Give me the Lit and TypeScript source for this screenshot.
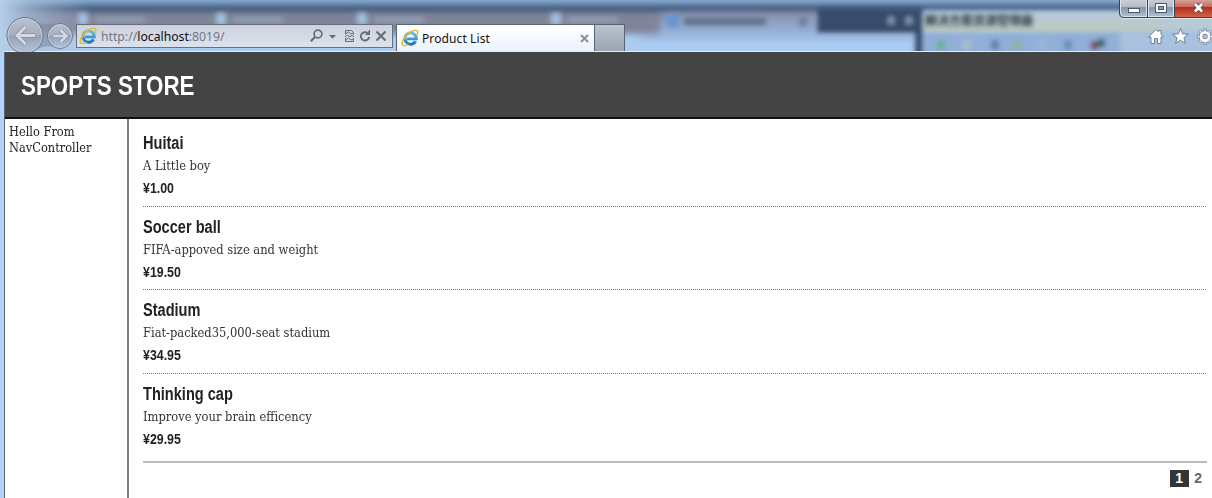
import { LitElement, html, svg, css, type TemplateResult } from 'lit';
import { customElement, property } from 'lit/decorators.js';

interface Product {
  name: string;
  description: string;
  price: string;
}

const PRODUCTS: Product[] = [
  { name: 'Huitai', description: 'A Little boy', price: '¥1.00' },
  { name: 'Soccer ball', description: 'FIFA-appoved size and weight', price: '¥19.50' },
  { name: 'Stadium', description: 'Fiat-packed35,000-seat stadium', price: '¥34.95' },
  { name: 'Thinking cap', description: 'Improve your brain efficency', price: '¥29.95' },
];

const ieLogo = html`
  <svg width="18" height="18" viewBox="0 0 18 18">
    <defs>
      <linearGradient id="e" x1="0" y1="0" x2="0" y2="1">
        <stop offset="0" stop-color="#5fc0f0" />
        <stop offset="1" stop-color="#1c76c4" />
      </linearGradient>
    </defs>
    <path d="M14.6 12.3A5.7 5.7 0 1 1 15.3 9.9H6" fill="none" stroke="url(#e)" stroke-width="2.9" />
    <path
      d="M3 16.6C-1 16 2.2 8.6 7.3 4.6C11.6 1.1 17-.1 16.8 3.4C16.8 4.3 16.4 5.2 15.9 6"
      fill="none"
      stroke="#efb81d"
      stroke-width="1.5"
    />
    <path d="M3 16.6C4.2 17 6 16.1 7.4 15.2" fill="none" stroke="#efb81d" stroke-width="1.3" />
  </svg>
`;

// ====================================================================
// Aero glass: blurred windows showing through the title bar
// ====================================================================
@customElement('glass-backdrop')
class GlassBackdrop extends LitElement {
  static styles = css`
    :host { display: block; }
    svg { display: block; }
  `;

  protected render(): TemplateResult {
    const tabs = [79, 217, 358, 552];
    const tools = [941, 967, 995, 1017, 1042, 1068];
    const toolColors = ['#62b39a', '#a9bdca', '#607fa6', '#8db39b', '#9cb8d8', '#668bb8'];
    return html`
      <svg width="1212" height="52" viewBox="0 0 1212 52">
        <defs>
          <filter id="soft" x="-10%" y="-30%" width="120%" height="160%">
            <feGaussianBlur stdDeviation="3" />
          </filter>
          <filter id="light" x="-10%" y="-30%" width="120%" height="160%">
            <feGaussianBlur stdDeviation="2.4" />
          </filter>
          <linearGradient id="edge" x1="0" y1="0" x2="1" y2="0">
            <stop offset="0" stop-color="#b5cfea" />
            <stop offset="0.4" stop-color="#a9bfd9" stop-opacity="0.6" />
            <stop offset="1" stop-color="#a9bfd9" stop-opacity="0" />
          </linearGradient>
        </defs>
        <rect width="1212" height="52" fill="#abcdf2" />
        <g filter="url(#soft)">
          <rect x="-10" y="-10" width="1240" height="14" fill="#88aad0" />
          <rect x="-10" y="4" width="1160" height="8" fill="#34547c" />
          <rect x="-10" y="12" width="670" height="22" fill="#7f8499" />
          <rect x="660" y="12" width="157" height="21" fill="#8e97b0" />
          <rect x="660" y="22" width="156" height="11" fill="#8fa9cc" />
          <rect x="640" y="36" width="274" height="3" fill="#8aa6c6" />
        </g>
        <g filter="url(#light)">
          ${tabs.map(
            (x) => svg`
              <rect x=${x - 1} y="13" width="10" height="12" fill="#a0c2de" />
              <rect x=${x + 16} y="17" width="50" height="6" fill="#929cb2" />
            `,
          )}
          <rect x="667" y="14" width="12" height="13" fill="#6595d2" />
          <rect x="684" y="18" width="82" height="7" fill="#5d6e8b" />
          <rect x="799" y="17" width="8" height="9" fill="#6a7f9f" />
          <rect x="817" y="8" width="98" height="25" fill="#374c6b" />
          <rect x="915" y="8" width="8" height="50" fill="#374d6e" />
          <rect x="888" y="17" width="6" height="7" fill="#8b9db5" />
          <rect x="906" y="17" width="6" height="7" fill="#8b9db5" />
          <rect x="924" y="11" width="300" height="20" fill="#b7cad6" />
          <rect x="924" y="24" width="240" height="7" fill="#bdcbba" />
          <rect x="924" y="32" width="300" height="30" fill="#91afd7" />
          ${tools.map((x, i) => svg`<rect x=${x - 4} y="40" width="8" height="10" fill=${toolColors[i]} />`)}
          <rect x="1091" y="41" width="7" height="9" fill="#7d3d57" />
          <rect x="1098" y="39" width="7" height="8" fill="#26644f" />
          <rect x="1120" y="33" width="110" height="30" fill="#a8c1df" />
        </g>
        <text x="925" y="25" font-family="Noto Sans CJK SC, sans-serif" font-weight="700"
          font-size="12" fill="#1d282e" opacity="0.95" filter="url(#light)">解决方案资源管理器</text>
        <rect width="90" height="52" fill="url(#edge)" />
        <rect x="4" y="51" width="1208" height="1" fill="#e4eef8" />
      </svg>
    `;
  }
}

// ====================================================================
// Browser window chrome
// ====================================================================
@customElement('browser-chrome')
class BrowserChrome extends LitElement {
  static styles = css`
    :host {
      display: block;
      position: relative;
      height: 52px;
      overflow: hidden;
      font-family: 'Noto Sans', 'Open Sans', sans-serif;
      font-size: 12px;
    }
    svg { display: block; flex: none; }
    glass-backdrop { position: absolute; inset: 0; }
    .bar {
      position: relative;
      display: flex;
      align-items: flex-start;
      height: 51px;
      box-sizing: border-box;
      padding: 16px 0 0 5px;
    }
    .address {
      box-sizing: border-box;
      display: flex;
      align-items: center;
      width: 317px;
      height: 24px;
      margin: 8px 0 0 1px;
      padding: 0 5px 0 2px;
      border: 1px solid #66707f;
      background: linear-gradient(#cdd1dc, #dbe2ee);
      color: #717780;
    }
    .url { flex: 1; margin-left: 4px; letter-spacing: 0.01px; font-size: 12.2px; }
    .url b { font-weight: 400; color: #0c0c0c; }
    .tab {
      box-sizing: border-box;
      display: flex;
      align-items: center;
      width: 199px;
      height: 27px;
      margin: 8px 0 0 3px;
      padding: 0 5px 0 4px;
      border: 1px solid #5a6370;
      border-bottom: 0;
      background: linear-gradient(#fff, #f7f9fd 50%, #e9f2fb);
      color: #111;
    }
    .tab span { flex: 1; margin: 1px 0 0 3px; letter-spacing: 0.1px; }
    .new-tab {
      box-sizing: border-box;
      width: 30px;
      height: 27px;
      margin-top: 8px;
      border: 1px solid #5a6370;
      border-left: 0;
      border-bottom: 0;
      background: linear-gradient(#bac3cf, #9ba5b1);
    }
    .tools { margin: 11px 0 0 auto; }
    .caption { position: absolute; top: 0; right: 0; }
  `;

  protected render(): TemplateResult {
    return html`
      <glass-backdrop></glass-backdrop>
      <div class="bar">
        ${this._navButtons()}
        <div class="address">
          ${ieLogo}
          <span class="url">http://<b>localhost</b>:8019/</span>
          ${this._addressIcons()}
        </div>
        <div class="tab">
          ${ieLogo}
          <span>Product List</span>
          <svg width="9" height="9" viewBox="0 0 9 9">
            <path d="M1 1L8 8M8 1L1 8" stroke="#8d9197" stroke-width="2" />
          </svg>
        </div>
        <div class="new-tab"></div>
        ${this._toolIcons()}
      </div>
      ${this._captionButtons()}
    `;
  }

  private _navButtons(): TemplateResult {
    return html`
      <svg width="70" height="36" viewBox="5 16 70 36">
        <defs>
          <linearGradient id="disc" x1="0" y1="0" x2="0" y2="1">
            <stop offset="0" stop-color="#b9c1d0" />
            <stop offset="0.48" stop-color="#a6afbf" />
            <stop offset="0.52" stop-color="#97a2b5" />
            <stop offset="1" stop-color="#b5c4da" />
          </linearGradient>
        </defs>
        <path d="M34 20Q43 26 54 23L54 47Q45 45 38 49Z" fill="#7c879c" opacity="0.55" />
        <circle cx="25" cy="35.5" r="18" fill="url(#disc)" stroke="#6b7688" />
        <circle cx="25" cy="35.5" r="16.9" fill="none" stroke="#c9d2df" stroke-width="0.7" />
        <path d="M25.5 27L17 35.5L25.5 44M17.5 35.5H35" fill="none" stroke="#8490a4" stroke-width="4.6" />
        <path d="M25.5 27L17 35.5L25.5 44M17.5 35.5H35" fill="none" stroke="#d3d9e2" stroke-width="3" />
        <circle cx="60" cy="36" r="12.5" fill="url(#disc)" stroke="#6b7688" />
        <circle cx="60" cy="36" r="11.5" fill="none" stroke="#c9d2df" stroke-width="0.7" />
        <path d="M60.5 30L66.5 36L60.5 42M66 36H53.5" fill="none" stroke="#8490a4" stroke-width="4" />
        <path d="M60.5 30L66.5 36L60.5 42M66 36H53.5" fill="none" stroke="#d3d9e2" stroke-width="2.5" />
      </svg>
    `;
  }

  private _addressIcons(): TemplateResult {
    return html`
      <svg width="78" height="16" viewBox="309 28 78 16" fill="none" stroke="#666c75">
        <circle cx="318" cy="34" r="3.9" stroke-width="1.7" />
        <path d="M315 37L310.8 41.2" stroke-width="2.3" />
        <path d="M329 35H336L332.5 38.7Z" fill="#666c75" stroke="none" />
        <path d="M345.5 34.5V30.5H351.5L353.5 32.5V34.5M345.5 38V41.5H353.5V38" />
        <path d="M346 33.5L348.5 32L351 34L353 33M345 36.8L347.5 35L350 37L352 35L354 37M346 39.5L348.5 38L351 40L353 39" />
        <path d="M367.6 33A4.2 4.2 0 1 0 369.2 37" stroke-width="1.9" />
        <path d="M365 35H370V29.5Z" fill="#666c75" stroke="none" />
        <path d="M376.5 31.5L385.5 40.5M385.5 31.5L376.5 40.5" stroke-width="2" />
      </svg>
    `;
  }

  private _toolIcons(): TemplateResult {
    const teeth = [0, 45, 90, 135, 180, 225, 270, 315];
    return html`
      <svg class="tools" width="66" height="20" viewBox="1146 27 66 20">
        <path
          d="M1156 29.5L1148.5 37H1151V43.5H1154.5V38.5H1157.5V43.5H1161V37H1163.5L1161 34.5V30.5H1158.5V32Z"
          fill="#fff" stroke="#66768c" stroke-width="0.9"
        />
        <path
          d="M1180.5 28.5L1182.6 33.9L1188.4 34.2L1183.9 37.8L1185.4 43.4L1180.5 40.2L1175.6 43.4L1177.1 37.8L1172.6 34.2L1178.4 33.9Z"
          fill="#fff" stroke="#66768c" stroke-width="0.9"
        />
        ${teeth.map(
          (a) => svg`<path d="M1203.4 33L1203.8 28.8H1206.2L1206.6 33Z" fill="#fff" stroke="#66768c"
            stroke-width="0.8" transform=${`rotate(${a} 1205 36.5)`} />`,
        )}
        <circle cx="1205" cy="36.5" r="4.1" fill="none" stroke="#66768c" stroke-width="4" />
        <circle cx="1205" cy="36.5" r="4.1" fill="none" stroke="#fff" stroke-width="2.9" />
      </svg>
    `;
  }

  private _captionButtons(): TemplateResult {
    return html`
      <svg class="caption" width="94" height="20" viewBox="1118 0 94 20">
        <defs>
          <linearGradient id="cap" x1="0" y1="0" x2="0" y2="1">
            <stop offset="0" stop-color="#c9d1da" />
            <stop offset="0.45" stop-color="#b2bdc9" />
            <stop offset="0.46" stop-color="#8696aa" />
            <stop offset="1" stop-color="#b1c4d8" />
          </linearGradient>
          <linearGradient id="red" x1="0" y1="0" x2="0" y2="1">
            <stop offset="0" stop-color="#dda79c" />
            <stop offset="0.45" stop-color="#c6685a" />
            <stop offset="0.46" stop-color="#b52e1b" />
            <stop offset="1" stop-color="#cf674b" />
          </linearGradient>
        </defs>
        <path d="M1119.5-1V13Q1119.5 17.5 1124 17.5H1213V-1Z" fill="url(#cap)" />
        <path d="M1174.5-1V17.5H1213V-1Z" fill="url(#red)" />
        <path d="M1120.5 0V13Q1120.5 16.5 1124 16.5H1146.5V0M1148.5 0V16.5H1173.5V0" fill="none" stroke="#dce5ee" />
        <path d="M1119.5-1V13Q1119.5 17.5 1124 17.5H1213M1147.5 0V17M1174.5 0V17" fill="none" stroke="#3b4552" />
        <path d="M1122 18.5H1212" stroke="#d9e4ee" />
        <rect x="1128.5" y="8.5" width="11" height="4" fill="#fff" stroke="#4e5866" />
        <rect x="1155.5" y="3.5" width="11" height="9" fill="#fff" stroke="#4e5866" />
        <rect x="1158.5" y="6.5" width="5" height="3" fill="#8c9aad" stroke="#4e5866" />
        <path d="M1195 4L1202 11.5M1202 4L1195 11.5" stroke="#4e4a53" stroke-width="4.6" />
        <path d="M1195 4L1202 11.5M1202 4L1195 11.5" stroke="#fff" stroke-width="2.7" />
      </svg>
    `;
  }
}

@customElement('product-item')
class ProductItem extends LitElement {
  @property({ attribute: false }) product!: Product;

  static styles = css`
    :host { display: block; }
    h3, h4, p {
      width: max-content;
      margin: 0;
      white-space: nowrap;
      color: #222;
      transform-origin: 0 50%;
    }
    h3, h4 { font-family: 'Liberation Sans', sans-serif; }
    h3 {
      padding-top: 9px;
      font-size: 17.6px;
      line-height: 22px;
      transform: scaleX(0.828);
    }
    p {
      font: 13px/23px 'DejaVu Serif Condensed', 'DejaVu Serif', serif;
      font-stretch: condensed;
      color: #333;
      transform: scaleX(0.982);
    }
    h4 {
      font-size: 14.4px;
      line-height: 22px;
      transform: scaleX(0.86);
    }
  `;

  protected render(): TemplateResult {
    return html`
      <h3>${this.product.name}</h3>
      <p>${this.product.description}</p>
      <h4>${this.product.price}</h4>
    `;
  }
}

@customElement('app-root')
export class AppRoot extends LitElement {
  static styles = css`
    :host {
      display: flex;
      flex-direction: column;
      height: 498px;
      overflow: hidden;
      background: #b3d2f5;
    }
    browser-chrome { flex: none; }
    .page {
      flex: 1;
      display: flex;
      flex-direction: column;
      min-height: 0;
      margin-left: 4px;
      border-left: 1px solid #59677b;
      background: #fff;
    }
    header {
      box-sizing: border-box;
      height: 67px;
      padding: 18px 16px 0;
      border-bottom: 2px solid #111;
      background: #444;
      color: #fff;
      font: 700 27px/32px 'Liberation Sans', sans-serif;
    }
    /* Arial Narrow proportions */
    header span {
      display: inline-block;
      transform: scaleX(0.828);
      transform-origin: 0 50%;
    }
    .columns { flex: 1; display: flex; min-height: 0; }
    nav {
      box-sizing: border-box;
      width: 124px;
      padding: 5px 4px;
      border-right: 2px solid #808080;
      color: #222;
      font: 13px/16px 'DejaVu Serif Condensed', 'DejaVu Serif', serif;
      font-stretch: condensed;
    }
    nav span {
      display: inline-block;
      transform: scaleX(0.975);
      transform-origin: 0 50%;
    }
    main { flex: 1; padding: 4px 5px 0 14px; }
    product-item {
      box-sizing: border-box;
      height: 83.5px;
      margin-right: 1px;
      border-bottom: 1px dotted #777;
    }
    product-item:last-of-type { border-bottom: 0; }
    .pager {
      display: flex;
      justify-content: flex-end;
      margin-top: 4px;
      padding: 7px 0 0;
      border-top: 2px solid #bbb;
      font: 700 14px/17px 'Liberation Sans', sans-serif;
    }
    .pager span { padding: 0 5px; color: #666; }
    .pager .selected { width: 8px; padding: 0 6px 0 5px; background: #353535; color: #fff; }
  `;

  protected render(): TemplateResult {
    return html`
      <browser-chrome></browser-chrome>
      <div class="page">
        <header><span>SPOPTS STORE</span></header>
        <div class="columns">
          <nav><span>Hello From NavController</span></nav>
          <main>
            ${PRODUCTS.map((p) => html`<product-item .product=${p}></product-item>`)}
            <div class="pager"><span class="selected">1</span><span>2</span></div>
          </main>
        </div>
      </div>
    `;
  }
}
